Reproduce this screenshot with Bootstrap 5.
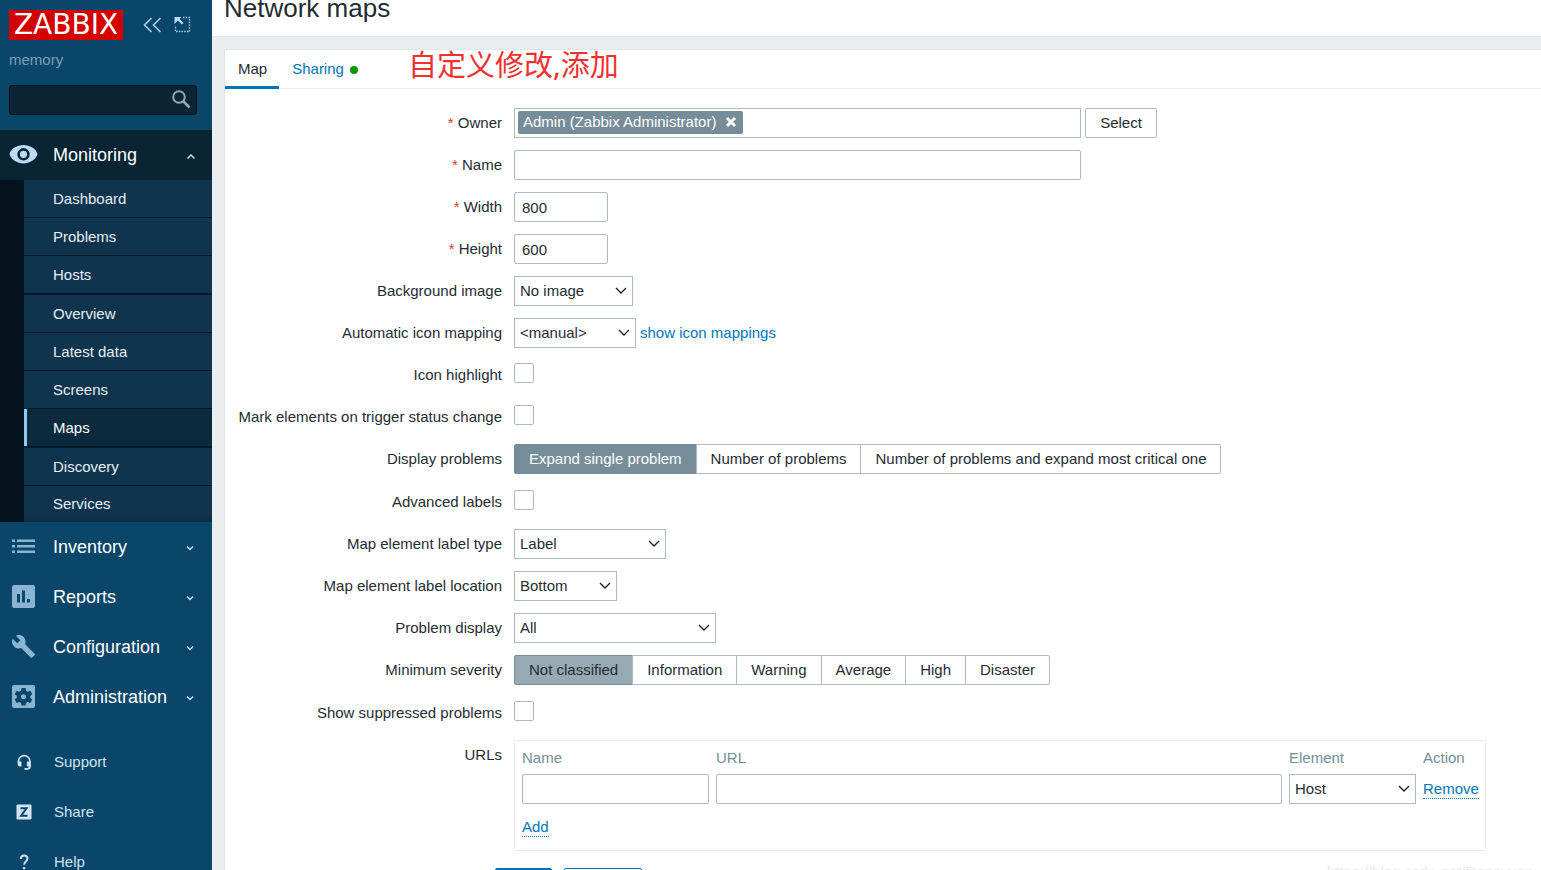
<!DOCTYPE html>
<html lang="en">
<head>
<meta charset="utf-8">
<meta name="viewport" content="width=device-width, initial-scale=1">
<title>Network maps</title>
<link href="https://cdn.jsdelivr.net/npm/bootstrap@5.3.0/dist/css/bootstrap.min.css" rel="stylesheet">
<style>
body{font-family:"Liberation Sans",Arial,sans-serif;font-size:15px;line-height:20px;color:#1f2c33;background:#ebeef0}
a{color:#0275b8;text-decoration:none}
.shell{height:100vh}
/* sidebar */
.side{width:212px;background:#0a466a;color:#fff}
.logo-box{width:114px;height:30px;background:#d40000;color:#fff;font:28px/30px "DejaVu Sans",sans-serif;text-align:center}
.side-top{height:130px;padding:10px 15px 0 9px}
.tools{gap:12px;margin-left:20px}
.server{color:#7d9fb4;margin:10px 0 15px;line-height:20px}
.search-box{height:30px}
.search-box input{height:30px;background:#0b2536;border:1px solid #041520;border-radius:3px;color:#fff;padding:0 34px 0 8px}
.search-box button{right:6px;top:4px;line-height:0}
.main-link{height:50px;padding:0 16px 0 11px;color:#fff;font-size:18px}
.main-link svg.ico{width:25px;height:25px;margin-right:17px;fill:#8bb4d3;overflow:visible}
.main-link.active{background:#092433}
.main-link.active svg.ico{fill:#bcdcf5}
.caret{width:10px;height:10px;fill:none;stroke:#cfe3f1;stroke-width:1.4}
.sub{background:linear-gradient(90deg,#04121c,#051824);padding:0 0 0 24px}
.sub a{display:flex;align-items:center;height:37px;padding-left:29px;color:#e3eef5;background:#10344d}
.sub li{border-bottom:1px solid #04182a}
.sub li:nth-child(4n+3){border-bottom-width:2px}
.sub li:last-child{border:0}
.sub li:last-child a{height:36px;background:linear-gradient(#10344d 75%,#0e2f45)}
.sub a.active{background:#0b2a3e;border-left:3px solid #8fcaf5;padding-left:26px;color:#fff}
.foot{margin-top:15px}
.foot a{height:50px;padding-left:16px;color:#cfe3f1}
.foot svg{width:16px;height:16px;margin-right:22px;fill:#cfe3f1}
/* page */
.head{height:37px;padding-left:12px;background:#fff;border-bottom:1px solid #dfe4e7}
.head h1{font-size:26px;line-height:17px;font-weight:400;margin:0}
.panel{margin:12px 0 0 12px;background:#fff;border:1px solid #dfe4e7;border-right:0;border-bottom:0}
.tabs{border-bottom:1px solid #ebeef0;height:39px}
.tabs .nav-link{border:0;border-radius:0;height:39px;padding:9px 12px 0 13px;color:#0275b8;border-bottom:3px solid transparent}
.tabs .nav-link.active{color:#1f2c33;border-bottom-color:#0275b8}
.dot{width:8px;height:8px;background:#009900;margin:7px 0 0 6px}
.note{font-family:"Noto Sans","Noto Sans CJK SC",sans-serif;font-size:29px;line-height:30px;color:#f23030;margin-left:38px}
.rows{padding:19px 0 0;display:grid;row-gap:12px}
.line{display:grid;grid-template-columns:277px minmax(0,1fr);column-gap:12px;min-height:30px}
.line.seg{min-height:31px}
.line>.lab{text-align:right;padding-top:5px}
.req::before{content:"* ";color:#e33734}
.ctl{height:30px;border:1px solid #acbbc2;border-radius:2px;background:#fff;color:#1f2c33;padding:0 7px;font-size:15px;line-height:20px}
select.ctl{border-radius:0;appearance:none;padding:0 24px 0 5px;background:#fff url("data:image/svg+xml,%3Csvg xmlns='http://www.w3.org/2000/svg' width='12' height='8'%3E%3Cpath d='M1 1l5 5 5-5' fill='none' stroke='%23222' stroke-width='1.4'/%3E%3C/svg%3E") no-repeat right 5px center}
.w-field{width:567px}.w-num{width:94px}.w-img{width:119px}.w-map{width:122px}.w-type{width:152px}.w-loc{width:103px}.w-disp{width:202px}
.w-pick{width:72px}
.owner{padding:2px 3px;border-radius:0}
.chip{height:23px;background:#768d99;color:#fff;border-radius:2px;padding:0 6px 2px 5px;gap:9px}
.chip button{line-height:0}
.tick{appearance:none;width:20px;height:20px;border:1px solid #acbbc2;border-radius:2px;margin:3px 0 0;background:#fff}
.tick:checked{background:#0275b8}
.opts{height:30px}
.opts label{height:30px;border:1px solid #acbbc2;padding:4px 14px;margin-left:-1px;line-height:20px;background:#fff}
.opts label:first-of-type{margin-left:0;border-radius:2px 0 0 2px}
.opts label:last-of-type{border-radius:0 2px 2px 0}
.opts .btn-check:checked+label{background:#768d99;border-color:#768d99;color:#fff}
.opts.sev .btn-check:checked+label{background:#97aab3;border-color:#768d99;color:#1f2c33}
.urls{width:972px;border:1px solid #ebeef0;padding:6px 4px 4px 3px;height:111px}
.urls table{table-layout:fixed}
.urls th{font-weight:400;color:#768d99;padding:1px 3px 6px 4px}
.urls td{padding:0 3px 0 4px}
.urls tr.more td{padding-top:13px}
.dash{border:0;border-bottom:1px dotted #0275b8;background:none;padding:0;color:#0275b8;line-height:18px}
.acts{padding:5px 0 0 270px;gap:12px}
.acts button{height:30px;border:1px solid #0275b8;border-radius:2px;background:#fff;color:#0275b8}
.acts .add{width:57px;background:#0275b8;color:#fff}
.acts .cancel{width:78px}
.mark-url{right:8px;bottom:-12px;color:#e6e8e9;font-size:15px;line-height:20px}
</style>
</head>
<body>
<div class="shell d-flex overflow-hidden position-relative">
<aside class="side flex-shrink-0">
  <div class="side-top">
    <div class="d-flex align-items-center">
      <a href="#" class="logo-box d-block">ZABBIX</a>
      <div class="tools d-flex">
      <button class="btn p-0 border-0 lh-1" aria-label="Collapse"><svg class="d-block" width="19" height="18" viewBox="0 0 19 18" fill="none" stroke="#a9cbe4" stroke-width="1.700"><path d="M8.500 2L1.500 9l7 7M17.500 2l-7 7 7 7"/></svg></button>
      <button class="btn p-0 border-0 lh-1" aria-label="Hide sidebar"><svg class="d-block" width="17" height="18" viewBox="0 0 17 18"><path d="M9 1.500H15.500V15.500H1.500V10" fill="none" stroke="#a9cbe4" stroke-width="1.400" stroke-dasharray="1.500 1.200"/><path d="M.5 1h7L5.500 3l4 4-1.600 1.600-4-4L.5 8z" fill="#bcdcf5"/></svg></button>
      </div>
    </div>
    <div class="server">memory</div>
    <form class="search-box position-relative"><input class="w-100" type="text" aria-label="Search"><button type="button" class="btn p-0 border-0 position-absolute" aria-label="Run search"><svg width="20" height="21" viewBox="0 0 20 21" fill="none" stroke="#8fa9b8"><circle cx="8" cy="8" r="5.800" stroke-width="2"/><path d="M12 12l6.500 6.500" stroke-width="2.600"/></svg></button></form>
  </div>
  <nav>
    <a href="#" class="main-link active d-flex align-items-center"><svg class="ico" viewBox="0 0 25 25"><path fill-rule="evenodd" d="M12.500 2C6.500 2-.5 5.500-1.500 11.300c2 5.800 8 9.200 14 9.200s12-3.400 14-9.200C25.500 5.500 18.500 2 12.500 2zm0 3.100a6.200 6.200 0 110 12.400 6.200 6.200 0 010-12.400zm0 2.600a3.600 3.600 0 100 7.200 3.600 3.600 0 000-7.200z"/></svg>Monitoring<svg class="caret ms-auto" viewBox="0 0 10 10"><path d="M1.500 8.500L5 5 8.500 8.500"/></svg></a>
    <ul class="sub list-unstyled m-0">
      <li><a href="#">Dashboard</a></li><li><a href="#">Problems</a></li><li><a href="#">Hosts</a></li><li><a href="#">Overview</a></li><li><a href="#">Latest data</a></li><li><a href="#">Screens</a></li><li><a href="#" class="active">Maps</a></li><li><a href="#">Discovery</a></li><li><a href="#">Services</a></li>
    </ul>
    <a href="#" class="main-link d-flex align-items-center"><svg class="ico" viewBox="0 0 25 25"><path d="M1 4.500h3V7H1zM6 4.500h18V7H6zM1 10h3v2.500H1zM6 10h18v2.500H6zM1 15.500h3V18H1zM6 15.500h18V18H6z"/></svg>Inventory<svg class="caret ms-auto" viewBox="0 0 10 10"><path d="M1 4.500L4 7.500 7 4.500"/></svg></a>
    <a href="#" class="main-link d-flex align-items-center"><svg class="ico" viewBox="0 0 25 25"><path fill-rule="evenodd" d="M3 0h19q2 0 2 2v19q0 2-2 2H3q-2 0-2-2V2Q1 0 3 0zM6 9v8.500h3V9zM11 5.500v12h3v-12zM16 14v3.500h3V14z"/></svg>Reports<svg class="caret ms-auto" viewBox="0 0 10 10"><path d="M1 4.500L4 7.500 7 4.500"/></svg></a>
    <a href="#" class="main-link d-flex align-items-center"><svg class="ico" viewBox="0 1 24 24"><path d="M22.700 19l-9.100-9.100c.9-2.300.4-5-1.500-6.900-2-2-5-2.400-7.400-1.300L9 6 6 9 1.600 4.700C.4 7.100.9 10.100 2.900 12.100c1.900 1.900 4.600 2.400 6.900 1.500l9.100 9.100c.4.400 1 .4 1.400 0l2.300-2.300c.5-.4.500-1.100.1-1.400z"/></svg>Configuration<svg class="caret ms-auto" viewBox="0 0 10 10"><path d="M1 4.500L4 7.500 7 4.500"/></svg></a>
    <a href="#" class="main-link d-flex align-items-center"><svg class="ico" viewBox="0 0 25 25"><rect x="1" width="23" height="23" rx="2"/><path fill="#0a466a" fill-rule="evenodd" d="M10.500 3h4l.5 2.700 1.700 1 2.600-1 2 3.500-2.100 1.700v1.800l2.100 1.700-2 3.500-2.600-1-1.700 1-.5 2.600h-4l-.5-2.600-1.700-1-2.600 1-2-3.500 2.100-1.700v-1.800L3.700 9.200l2-3.500 2.600 1 1.700-1zm2 6.300a2.500 2.500 0 100 5 2.500 2.500 0 000-5z"/></svg>Administration<svg class="caret ms-auto" viewBox="0 0 10 10"><path d="M1 4.500L4 7.500 7 4.500"/></svg></a>
  </nav>
  <div class="foot">
    <a href="#" class="d-flex align-items-center"><svg viewBox="0 0 16 16"><path d="M2.500 9V7.300a5.700 5.700 0 0111.400 0V12.500q0 2.300-2.300 2.300H8.500" fill="none" stroke="#cfe3f1" stroke-width="1.700"/><path d="M1.700 7.500h3.800v5H4q-2.300 0-2.300-2zM10.900 7.500h3.800v5h-3.800z"/></svg>Support</a>
    <a href="#" class="d-flex align-items-center"><svg viewBox="0 0 16 16"><rect x=".5" y=".5" width="15" height="15" rx="1"/><path d="M4.500 4.300h6L5.200 11.700h6.300" fill="none" stroke="#0a466a" stroke-width="2"/></svg>Share</a>
    <a href="#" class="d-flex align-items-center"><svg viewBox="0 0 16 16"><path d="M4.800 5C4.800.500 11.500.500 11.500 4.500c0 3-3.400 3-3.400 6.300" fill="none" stroke="#cfe3f1" stroke-width="1.900"/><rect x="7" y="13" width="2.200" height="2.200"/></svg>Help</a>
  </div>
</aside>
<main class="flex-grow-1 overflow-hidden">
  <header class="head"><h1>Network maps</h1></header>
  <section class="panel">
    <div class="tabs d-flex">
      <ul class="nav flex-nowrap">
        <li class="nav-item"><a href="#" class="nav-link active">Map</a></li>
        <li class="nav-item"><a href="#" class="nav-link d-flex">Sharing<span class="dot rounded-circle"></span></a></li>
      </ul>
      <div class="note">自定义修改,添加</div>
    </div>
    <form class="rows">
      <div class="line"><label class="lab req" for="owner">Owner</label><div class="d-flex"><div class="ctl owner w-field d-flex"><span class="chip d-flex align-items-center flex-shrink-0">Admin (Zabbix Administrator)<button type="button" class="btn p-0 border-0" aria-label="Remove owner"><svg width="12" height="12" viewBox="0 0 12 12" stroke="#fff" stroke-width="3"><path d="M2 2l8 8M10 2l-8 8"/></svg></button></span><input id="owner" type="text" class="border-0 flex-fill p-0"></div><button type="button" class="ctl w-pick ms-1">Select</button></div></div>
      <div class="line"><label class="lab req" for="name">Name</label><div><input id="name" type="text" class="ctl w-field"></div></div>
      <div class="line"><label class="lab req" for="width">Width</label><div><input id="width" type="text" class="ctl w-num" value="800"></div></div>
      <div class="line"><label class="lab req" for="height">Height</label><div><input id="height" type="text" class="ctl w-num" value="600"></div></div>
      <div class="line"><label class="lab" for="bg">Background image</label><div><select id="bg" class="ctl w-img"><option>No image</option></select></div></div>
      <div class="line"><label class="lab" for="im">Automatic icon mapping</label><div class="d-flex align-items-center gap-1"><select id="im" class="ctl w-map"><option>&lt;manual&gt;</option></select><a href="#">show icon mappings</a></div></div>
      <div class="line"><label class="lab" for="hl">Icon highlight</label><div><input id="hl" type="checkbox" class="tick"></div></div>
      <div class="line"><label class="lab" for="me">Mark elements on trigger status change</label><div><input id="me" type="checkbox" class="tick"></div></div>
      <div class="line seg"><span class="lab" id="dp">Display problems</span><div class="opts d-flex" role="radiogroup" aria-labelledby="dp"><input class="btn-check" type="radio" name="dp" id="dp1" checked><label for="dp1">Expand single problem</label><input class="btn-check" type="radio" name="dp" id="dp2"><label for="dp2">Number of problems</label><input class="btn-check" type="radio" name="dp" id="dp3"><label for="dp3">Number of problems and expand most critical one</label></div></div>
      <div class="line"><label class="lab" for="al">Advanced labels</label><div><input id="al" type="checkbox" class="tick"></div></div>
      <div class="line"><label class="lab" for="lt">Map element label type</label><div><select id="lt" class="ctl w-type"><option>Label</option></select></div></div>
      <div class="line"><label class="lab" for="ll">Map element label location</label><div><select id="ll" class="ctl w-loc"><option>Bottom</option></select></div></div>
      <div class="line"><label class="lab" for="pd">Problem display</label><div><select id="pd" class="ctl w-disp"><option>All</option></select></div></div>
      <div class="line seg"><span class="lab" id="ms">Minimum severity</span><div class="opts sev d-flex" role="radiogroup" aria-labelledby="ms"><input class="btn-check" type="radio" name="ms" id="s0" checked><label for="s0">Not classified</label><input class="btn-check" type="radio" name="ms" id="s1"><label for="s1">Information</label><input class="btn-check" type="radio" name="ms" id="s2"><label for="s2">Warning</label><input class="btn-check" type="radio" name="ms" id="s3"><label for="s3">Average</label><input class="btn-check" type="radio" name="ms" id="s4"><label for="s4">High</label><input class="btn-check" type="radio" name="ms" id="s5"><label for="s5">Disaster</label></div></div>
      <div class="line"><label class="lab" for="sp">Show suppressed problems</label><div><input id="sp" type="checkbox" class="tick"></div></div>
      <div class="line"><span class="lab">URLs</span><div class="urls"><table class="w-100">
        <colgroup><col style="width:194px"><col style="width:573px"><col style="width:134px"><col></colgroup>
        <thead><tr><th>Name</th><th>URL</th><th>Element</th><th>Action</th></tr></thead>
        <tbody><tr><td><input type="text" class="ctl w-100" aria-label="Name"></td><td><input type="text" class="ctl w-100" aria-label="URL"></td><td><select class="ctl w-100" aria-label="Element"><option>Host</option></select></td><td><button type="button" class="dash">Remove</button></td></tr>
        <tr class="more"><td colspan="4"><button type="button" class="dash">Add</button></td></tr></tbody></table></div></div>
      <div class="acts d-flex"><button type="button" class="add">Add</button><button type="button" class="cancel">Cancel</button></div>
    </form>
  </section>
</main>
<div class="mark-url position-absolute">https://blog.csdn.net/Dannyvon</div>
</div>
<script src="https://cdn.jsdelivr.net/npm/bootstrap@5.3.0/dist/js/bootstrap.bundle.min.js"></script>
</body>
</html>
